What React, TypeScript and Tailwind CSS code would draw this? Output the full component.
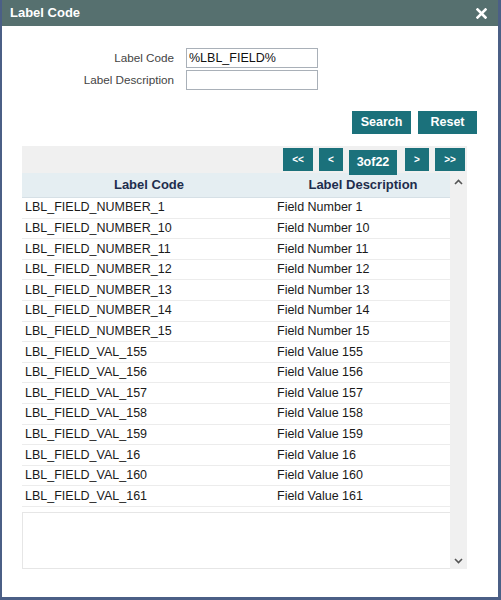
import React from 'react';

const ROWS = [
  ['LBL_FIELD_NUMBER_1', 'Field Number 1'],
  ['LBL_FIELD_NUMBER_10', 'Field Number 10'],
  ['LBL_FIELD_NUMBER_11', 'Field Number 11'],
  ['LBL_FIELD_NUMBER_12', 'Field Number 12'],
  ['LBL_FIELD_NUMBER_13', 'Field Number 13'],
  ['LBL_FIELD_NUMBER_14', 'Field Number 14'],
  ['LBL_FIELD_NUMBER_15', 'Field Number 15'],
  ['LBL_FIELD_VAL_155', 'Field Value 155'],
  ['LBL_FIELD_VAL_156', 'Field Value 156'],
  ['LBL_FIELD_VAL_157', 'Field Value 157'],
  ['LBL_FIELD_VAL_158', 'Field Value 158'],
  ['LBL_FIELD_VAL_159', 'Field Value 159'],
  ['LBL_FIELD_VAL_16', 'Field Value 16'],
  ['LBL_FIELD_VAL_160', 'Field Value 160'],
  ['LBL_FIELD_VAL_161', 'Field Value 161'],
];

const btn = 'bg-[#1b717b] text-white font-bold flex items-center justify-center';

export default function App() {
  return (
    <div
      className="w-[501px] h-[600px] bg-white border-l-2 border-r-[3px] border-b-[3px] border-[#4b5f86] flex flex-col text-[#333]"
      style={{ fontFamily: '"Liberation Sans", Arial, sans-serif' }}
    >
      {/* Title bar */}
      <div className="h-[26px] bg-[#56706f] flex items-center justify-between pl-[8px] pr-[8px] shrink-0">
        <span className="text-white font-bold text-[13px]">Label Code</span>
        <svg width="11" height="11" viewBox="0 0 11 11" className="mr-[3px]">
          <path d="M1.5 1.5 L9.5 9.5 M9.5 1.5 L1.5 9.5" stroke="white" strokeWidth="2.6" strokeLinecap="square" />
        </svg>
      </div>

      {/* Search form */}
      <div className="mt-[22px] flex flex-col gap-[2px]">
        <div className="flex items-center">
          <label className="w-[172px] text-right text-[11.7px] text-[#444]">Label Code</label>
          <input
            defaultValue="%LBL_FIELD%"
            className="ml-[12px] w-[132px] h-[20px] border border-[#a9b0b8] px-[2px] text-[12.5px] text-[#111] outline-none"
          />
        </div>
        <div className="flex items-center">
          <label className="w-[172px] text-right text-[11.7px] text-[#444]">Label Description</label>
          <input className="ml-[12px] w-[132px] h-[20px] border border-[#a9b0b8] px-[2px] text-[12.5px] outline-none" />
        </div>
      </div>

      {/* Actions */}
      <div className="mt-[21px] flex justify-end gap-[7px] pr-[21px]">
        <button className={`${btn} w-[59px] h-[23px] text-[12.5px]`}>Search</button>
        <button className={`${btn} w-[59px] h-[23px] text-[12.5px]`}>Reset</button>
      </div>

      {/* Results table */}
      <div className="mt-[12px] ml-[20px] w-[445px] h-[423px] flex flex-col">
        <div className="h-[27px] bg-[#f0f0f0] flex items-start justify-end pr-[2px] pt-[2px] shrink-0">
          <button className={`${btn} w-[30px] h-[23px] text-[10px]`}>&lt;&lt;</button>
          <button className={`${btn} ml-[6px] w-[24px] h-[23px] text-[10px]`}>&lt;</button>
          <button className={`${btn} ml-[6px] mt-[2px] w-[48px] h-[25px] text-[12.5px] relative z-10`}>3of22</button>
          <button className={`${btn} ml-[8px] w-[24px] h-[23px] text-[10px]`}>&gt;</button>
          <button className={`${btn} ml-[6px] w-[30px] h-[23px] text-[10px]`}>&gt;&gt;</button>
        </div>
        <div className="flex flex-1">
          <div className="w-[428px] flex flex-col">
            <div className="h-[25px] bg-[#e5eef2] border-b border-[#d6e0e6] flex items-center font-bold text-[13px] text-[#1e2d4d] shrink-0">
              <div className="w-[254px] text-center">Label Code</div>
              <div className="flex-1 text-center">Label Description</div>
            </div>
            <div className="flex flex-col">
              {ROWS.map(([code, desc]) => (
                <div key={code} className="h-[20.6px] border-b border-[#ececec] flex items-center text-[12.5px] text-[#1a1a1a]">
                  <div className="w-[254px] pl-[3px]">{code}</div>
                  <div className="flex-1 pl-[1px]">{desc}</div>
                </div>
              ))}
            </div>
            <div className="mt-[5px] flex-1 border border-[#e6e6e6] border-r-0"></div>
          </div>
          <div className="w-[17px] bg-[#f0f0f0] flex flex-col items-center justify-between pt-[6px] pb-[5px]">
            <svg width="9" height="6" viewBox="0 0 9 6">
              <path d="M1 5 L4.5 1.5 L8 5" fill="none" stroke="#555" strokeWidth="1.6" />
            </svg>
            <svg width="9" height="6" viewBox="0 0 9 6">
              <path d="M1 1 L4.5 4.5 L8 1" fill="none" stroke="#555" strokeWidth="1.6" />
            </svg>
          </div>
        </div>
      </div>
    </div>
  );
}
